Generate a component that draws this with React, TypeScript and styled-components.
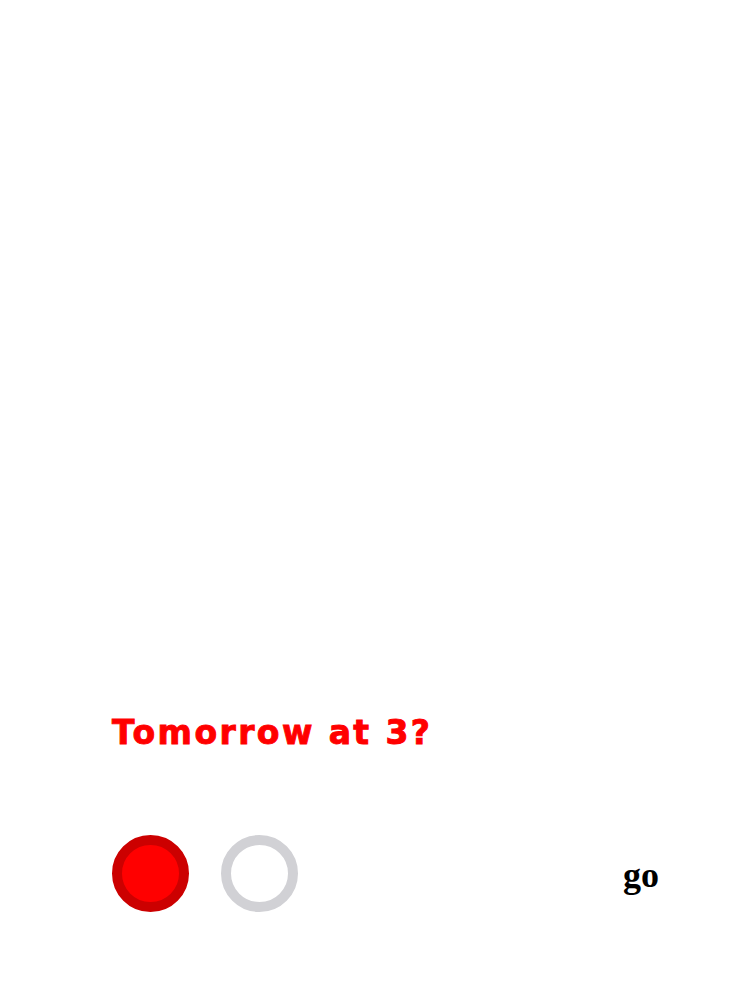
import React from "react";
import styled, { createGlobalStyle } from "styled-components";

const Global = createGlobalStyle`
  html, body { margin: 0; padding: 0; background: #ffffff; }
  * { box-sizing: border-box; }
`;

const Page = styled.div`
  width: 750px;
  height: 1000px;
  display: flex;
  flex-direction: column;
  justify-content: flex-end;
  padding: 0 91px 88px 112px;
`;

const Question = styled.h1`
  margin: 0 0 80px 0;
  font-family: "DejaVu Sans", "Liberation Sans", sans-serif;
  font-weight: 700;
  font-size: 33px;
  line-height: 44px;
  color: #ff0000;
  letter-spacing: 2.4px;
  -webkit-text-stroke: 0.9px #ff0000;
`;

const Row = styled.div`
  display: flex;
  align-items: center;
  gap: 32px;
`;

const Dot = styled.button<{ $active?: boolean }>`
  width: 77px;
  height: 77px;
  border-radius: 50%;
  padding: 0;
  border: 10px solid ${(p) => (p.$active ? "#cc0000" : "#d1d1d5")};
  background: ${(p) => (p.$active ? "#ff0000" : "#ffffff")};
  cursor: pointer;
`;

const Go = styled.span`
  margin-left: auto;
  font-family: "Liberation Serif", "Times New Roman", serif;
  font-weight: 700;
  font-size: 36px;
  line-height: 40px;
  padding-top: 2px;
  color: #000000;
`;

export default function App() {
  return (
    <>
      <Global />
      <Page>
        <Question>Tomorrow at 3?</Question>
        <Row>
          <Dot $active aria-label="yes" />
          <Dot aria-label="no" />
          <Go>go</Go>
        </Row>
      </Page>
    </>
  );
}
